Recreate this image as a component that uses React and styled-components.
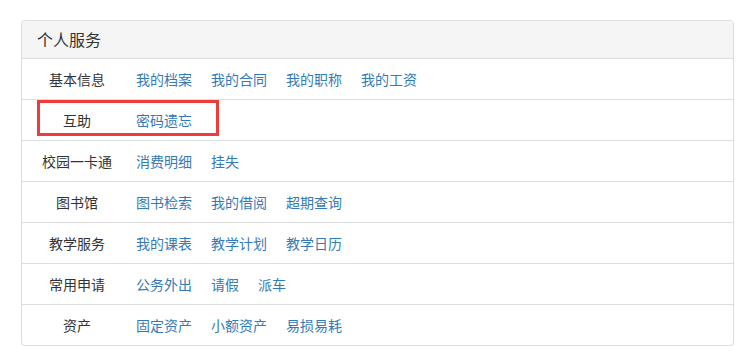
import React from "react";
import styled, { createGlobalStyle } from "styled-components";

const Global = createGlobalStyle`
  html, body { margin: 0; padding: 0; background: #fff; }
  body {
    font-family: "Helvetica Neue", "Liberation Sans", "Noto Sans CJK SC", sans-serif;
    font-size: 14px;
    color: #333;
  }
`;

const Page = styled.div`
  padding: 20px 22px 0 21px;
`;

const Panel = styled.div`
  position: relative;
  border: 1px solid #ddd;
  border-radius: 4px;
  background: #fff;
  box-shadow: 0 1px 1px rgba(0, 0, 0, 0.05);
  overflow: hidden;
`;

const Header = styled.div`
  height: 38px;
  box-sizing: border-box;
  background: #f5f5f5;
  border-bottom: 1px solid #ddd;
  display: flex;
  align-items: center;
  padding: 0 0 2px 15px;
  font-size: 16px;
  color: #333;
`;

const Row = styled.div`
  display: flex;
  align-items: center;
  box-sizing: border-box;
  height: ${(p) => (p.$first ? "40px" : "41px")};
  padding-bottom: 1px;
  border-top: ${(p) => (p.$first ? "none" : "1px solid #ddd")};
`;

const Label = styled.div`
  width: 110px;
  text-align: center;
  color: #333;
  font-size: 14px;
`;

const Links = styled.div`
  display: flex;
  gap: 19px;
  padding-left: 4px;
`;

const Link = styled.a`
  color: #337ab7;
  text-decoration: none;
  font-size: 14px;
  cursor: pointer;
`;

const Highlight = styled.div`
  position: absolute;
  left: 15px;
  top: 79px;
  width: 176px;
  height: 30px;
  border: 3px solid #f03b3b;
  pointer-events: none;
`;

const rows = [
  ["基本信息", ["我的档案", "我的合同", "我的职称", "我的工资"]],
  ["互助", ["密码遗忘"]],
  ["校园一卡通", ["消费明细", "挂失"]],
  ["图书馆", ["图书检索", "我的借阅", "超期查询"]],
  ["教学服务", ["我的课表", "教学计划", "教学日历"]],
  ["常用申请", ["公务外出", "请假", "派车"]],
  ["资产", ["固定资产", "小额资产", "易损易耗"]],
];

export default function App() {
  return (
    <Page>
      <Global />
      <Panel>
        <Header>个人服务</Header>
        {rows.map(([label, links], i) => (
          <Row key={label} $first={i === 0}>
            <Label>{label}</Label>
            <Links>
              {links.map((l) => (
                <Link key={l}>{l}</Link>
              ))}
            </Links>
          </Row>
        ))}
        <Highlight />
      </Panel>
    </Page>
  );
}
